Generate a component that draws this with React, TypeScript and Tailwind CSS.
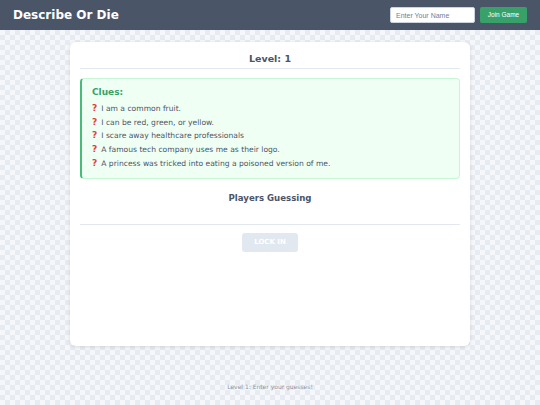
import React from "react";

const clues = [
  "I am a common fruit.",
  "I can be red, green, or yellow.",
  "I scare away healthcare professionals",
  "A famous tech company uses me as their logo.",
  "A princess was tricked into eating a poisoned version of me.",
];

export default function App() {
  return (
    <div
      className="min-h-[405px] flex flex-col bg-[repeating-conic-gradient(#e7ecf2_0%_25%,#f5f7fa_0%_50%)] bg-[length:10px_10px]"
      style={{ fontFamily: '"DejaVu Sans", Verdana, sans-serif' }}
    >
      {/* Header */}
      <header className="h-[30px] bg-[#4a5568] flex items-center justify-between pl-[13px] pr-[13px]">
        <h1 className="text-white font-bold text-[12px] leading-none">Describe Or Die</h1>
        <div className="flex items-center gap-[5px]">
          <input
            placeholder="Enter Your Name"
            className="w-[85px] h-[16px] bg-white rounded-[2px] border border-[#cbd5e0] px-[5px] text-[7px] text-[#2d3748] placeholder:text-[#718096] outline-none"
            style={{ fontFamily: '"Liberation Sans", Arial, sans-serif' }}
          />
          <button
            className="w-[47px] h-[16px] bg-[#38a169] rounded-[2px] text-white text-[6.5px]"
            style={{ fontFamily: '"Liberation Sans", Arial, sans-serif' }}
          >
            Join Game
          </button>
        </div>
      </header>

      {/* Main card */}
      <main className="flex justify-center pt-[12px]">
        <div className="w-[400px] h-[304px] bg-white rounded-[6px] shadow-[0_1px_4px_rgba(0,0,0,0.12)] px-[10px] pt-[10px]">
          <h2 className="text-center text-[9.5px] font-bold text-[#4a5568] leading-[14px] pb-[2px] border-b border-[#e2e8f0]">
            Level: 1
          </h2>

          <div className="mt-[9px] bg-[#f0fff4] border border-[#c6f6d5] border-l-[2px] border-l-[#48bb78] rounded-[4px] pl-[10px] pt-[8px] pb-[7px]">
            <h3 className="text-[9px] font-bold text-[#38a169] leading-[11px] mb-[4px]">Clues:</h3>
            <ul className="flex flex-col">
              {clues.map((c) => (
                <li key={c} className="text-[7.6px] text-[#4a5568] leading-[13.7px]">
                  <span className="text-[#e53e3e] font-bold text-[9px] mr-[4px]">?</span>
                  {c}
                </li>
              ))}
            </ul>
          </div>

          <h3 className="text-center text-[8.6px] font-bold text-[#4a5568] mt-[13px] leading-[12px]">
            Players Guessing
          </h3>

          <div className="mt-[20px] border-t border-[#e2e8f0] flex justify-center pt-[8px]">
            <button className="w-[56px] h-[19px] bg-[#e2e8f0] rounded-[3px] text-white text-[7px] font-bold">
              LOCK IN
            </button>
          </div>
        </div>
      </main>

      <footer className="text-center text-[6px] text-[#8a94a6] mt-[36px]">
        Level 1: Enter your guesses!
      </footer>
    </div>
  );
}
